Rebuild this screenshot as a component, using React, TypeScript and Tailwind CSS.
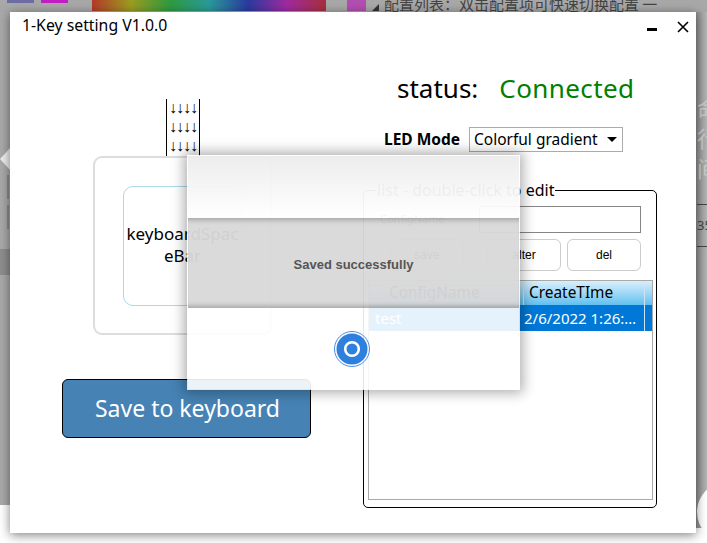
const ui = { fontFamily: '"Noto Sans", "Liberation Sans", sans-serif' };
const cjk = { fontFamily: '"Noto Sans CJK SC", sans-serif' };

function Desktop() {
  return (
    <div className="absolute inset-0 overflow-hidden bg-white">
      <div className="absolute left-0 top-0 h-[505px] w-[10px] bg-[#a9a9a9]" />
      <div className="absolute right-0 top-0 h-[528px] w-[11px] bg-gradient-to-r from-[#8f8f8f] to-[#b4b4b4]" />
      <div className="absolute left-[697px] top-[482px] h-[60px] w-[60px] rounded-full bg-white" />
      <div className="absolute left-0 top-0 h-[12px] w-full bg-[#a8a8a8]" />
      <div className="absolute left-[7px] top-0 h-[3px] w-[27px] bg-[#6d6da3]" />
      <div className="absolute left-[41px] top-0 h-[3px] w-[27px] bg-[#c21fc2]" />
      <div className="absolute left-[92px] top-0 h-[11px] w-[234px] bg-[linear-gradient(90deg,#b33a2a,#9c9c20,#2f9a3f,#2a9a9a,#2a3aa0,#a02aa0,#a8303a)]" />
      <div className="absolute left-[347px] top-0 h-[11px] w-[19px] bg-[#b24fb2]" />
      <div className="absolute left-[372px] top-[4px] h-0 w-0 border-b-[7px] border-l-[7px] border-b-[#333] border-l-transparent" />
      <div className="absolute left-[384px] top-[-7px] whitespace-nowrap text-[15px] text-[#444]" style={cjk}>
        配置列表：双击配置项可快速切换配置 一
      </div>
      <div className="absolute left-[0px] top-[148px] h-0 w-0 border-y-[11px] border-r-[10px] border-y-transparent border-r-[#eeeeee]" />
      <div className="absolute left-0 top-[249px] h-[26px] w-[10px] bg-[#8e8e8e]" />
      <div className="absolute left-[7px] top-[175px] h-[24px] w-[2px] bg-[#8a8a8a]" />
      <div className="absolute left-[7px] top-[205px] h-[24px] w-[2px] bg-[#8a8a8a]" />
      <div className="absolute left-[697px] top-[92px] w-[24px] text-[22px] leading-[30px] text-[#c9c9c9]" style={cjk}>
        命<br />行<br />间
      </div>
      <div className="absolute left-[697px] top-[204px] h-px w-[10px] bg-[#444]" />
      <div className="absolute left-[697px] top-[246px] h-px w-[10px] bg-[#444]" />
      <div className="absolute left-[697px] top-[216px] text-[13px] text-[#444]">35</div>
    </div>
  );
}

function LeftPane() {
  return (
    <div className="flex w-[343px] flex-col items-start">
      <div
        className="ml-[156px] mt-[57px] flex h-[57px] w-[34px] flex-col items-center border-x border-black text-[16px] leading-[19px] tracking-[-1px] text-black"
        style={{ fontFamily: '"Liberation Sans", sans-serif' }}
      >
        <span className="-mt-[1px]">↓↓↓↓</span>
        <span>↓↓↓↓</span>
        <span>↓↓↓↓</span>
      </div>
      <div className="ml-[83px] flex h-[179px] w-[179px] items-center justify-center rounded-[9px] border-2 border-[#dddddd]">
        <div className="flex h-[120px] w-[120px] items-center justify-center rounded-[10px] border border-[#add8e6] px-[3px] pb-[2px] text-center text-[17px] leading-[22px] text-black [overflow-wrap:anywhere]">
          keyboardSpaceBar
        </div>
      </div>
      <button className="ml-[52px] mt-[44px] flex h-[59px] w-[249px] items-center justify-center rounded-[6px] border border-black bg-[#4682b4] pl-[2px] text-[23px] text-white">
        Save to keyboard
      </button>
    </div>
  );
}

function ListBox() {
  return (
    <div className="relative ml-[10px] mt-[37px] flex h-[318px] w-[294px] flex-col rounded-[5px] border border-black pb-[7px] pl-[4px] pr-[3px] pt-[15px]">
      <span className="absolute left-[12px] top-[-12px] bg-white px-px text-[16px] leading-[22px] text-black">
        list - double-click to edit
      </span>
      <div className="flex h-[27px] items-center pl-[12px]">
        <span className="w-[99px] text-[11px] text-black">ConfigName</span>
        <div className="h-[27px] w-[162px] border border-[#858585] bg-white" />
      </div>
      <div
        className="mt-[6px] flex h-[32px] justify-end gap-[6px] pr-[12px] text-[12px] text-black"
        style={{ fontFamily: '"Liberation Sans", sans-serif' }}
      >
        <button className="mr-[17px] w-[74px] rounded-[6px] border border-[#cccccc]">save</button>
        <button className="w-[74px] rounded-[6px] border border-[#cccccc]">alter</button>
        <button className="w-[74px] rounded-[6px] border border-[#cccccc]">del</button>
      </div>
      <div className="mt-[9px] flex-1 border border-[#a9a9a9] bg-white">
        <div className="flex h-[24px] bg-gradient-to-b from-[#d8effc] to-[#5fc0f0] text-[15.4px] leading-[24px] text-black">
          <span className="w-[155px] border-r border-[#cfe4f2] pl-[20px]">ConfigName</span>
          <span className="w-[120px] pl-[5px]">CreateTIme</span>
          <span className="flex-1 border-l border-[#cfe4f2]" />
        </div>
        <div className="flex h-[26px] bg-[#0078d7] text-[15px] leading-[26px] text-white">
          <span className="w-[155px] pl-[6px]">test</span>
          <span className="w-[120px] truncate">2/6/2022 1:26:33 PM</span>
          <span className="flex-1 border-l border-[#cfe4f2]" />
        </div>
      </div>
    </div>
  );
}

function RightPane() {
  return (
    <div className="flex flex-1 flex-col">
      <div className="ml-[44px] mt-[28px] flex h-[36px] items-center text-[26px] leading-[36px]">
        <span className="text-black">status:</span>
        <span className="ml-[21px] tracking-[0.4px] text-[#008000]">Connected</span>
      </div>
      <div className="ml-[31px] mt-[21px] flex h-[25px] items-center">
        <span className="w-[85px] text-[15.5px] font-bold text-black">LED Mode</span>
        <div className="flex h-[25px] w-[154px] items-center justify-between border border-[#ababab] pl-[4px] pr-[5px] text-[15.5px] text-black">
          <span>Colorful gradient</span>
          <span className="h-0 w-0 border-x-[5px] border-t-[5px] border-x-transparent border-t-black" />
        </div>
      </div>
      <div className="mt-px" />
      <ListBox />
    </div>
  );
}

function SavedDialog() {
  return (
    <div
      className="absolute left-[177px] top-[143px] flex h-[235px] w-[333px] flex-col border border-white/80 shadow-[0_0_12px_3px_rgba(0,0,0,0.32)]"
      style={{ fontFamily: '"Liberation Sans", sans-serif' }}
    >
      <div className="h-[62px] bg-gradient-to-b from-[#ececec]/96 to-white/96" />
      <div className="flex h-[90px] items-center justify-center bg-[#d8d8d8]/96 pt-[3px] text-[13px] font-bold text-[#555555] shadow-[inset_0_6px_5px_-4px_rgba(0,0,0,0.25),inset_0_-6px_5px_-4px_rgba(0,0,0,0.25)]">
        Saved successfully
      </div>
      <div className="flex flex-1 justify-center bg-white/90 pr-[4px] pt-[23px]">
        <svg width="36" height="36" viewBox="0 0 36 36">
          <circle cx="18" cy="18" r="17.5" fill="none" stroke="#4a8be0" strokeWidth="1" />
          <circle cx="18" cy="18" r="15.5" fill="#2f7fdc" />
          <circle cx="18" cy="18" r="6.8" fill="none" stroke="#ffffff" strokeWidth="2.6" />
        </svg>
      </div>
    </div>
  );
}

export default function App() {
  return (
    <div className="relative h-[543px] w-[707px] overflow-hidden" style={ui}>
      <Desktop />
      <div className="absolute left-[10px] top-[12px] flex h-[521px] w-[686px] flex-col bg-white shadow-[0_2px_10px_rgba(0,0,0,0.5)]">
        <div className="flex h-[30px] shrink-0 items-center justify-between pl-[12px] pr-[6px]">
          <span className="-mt-[2px] text-[15.8px] text-black">1-Key setting V1.0.0</span>
          <div className="flex items-center gap-[20px]">
            <span className="mt-[5px] h-[3px] w-[10px] bg-black" />
            <svg width="12" height="12" viewBox="0 0 12 12" className="mr-[1px]">
              <path d="M1 1 L11 11 M11 1 L1 11" stroke="#000" strokeWidth="1.6" fill="none" />
            </svg>
          </div>
        </div>
        <div className="flex flex-1">
          <LeftPane />
          <RightPane />
        </div>
        <SavedDialog />
      </div>
    </div>
  );
}
